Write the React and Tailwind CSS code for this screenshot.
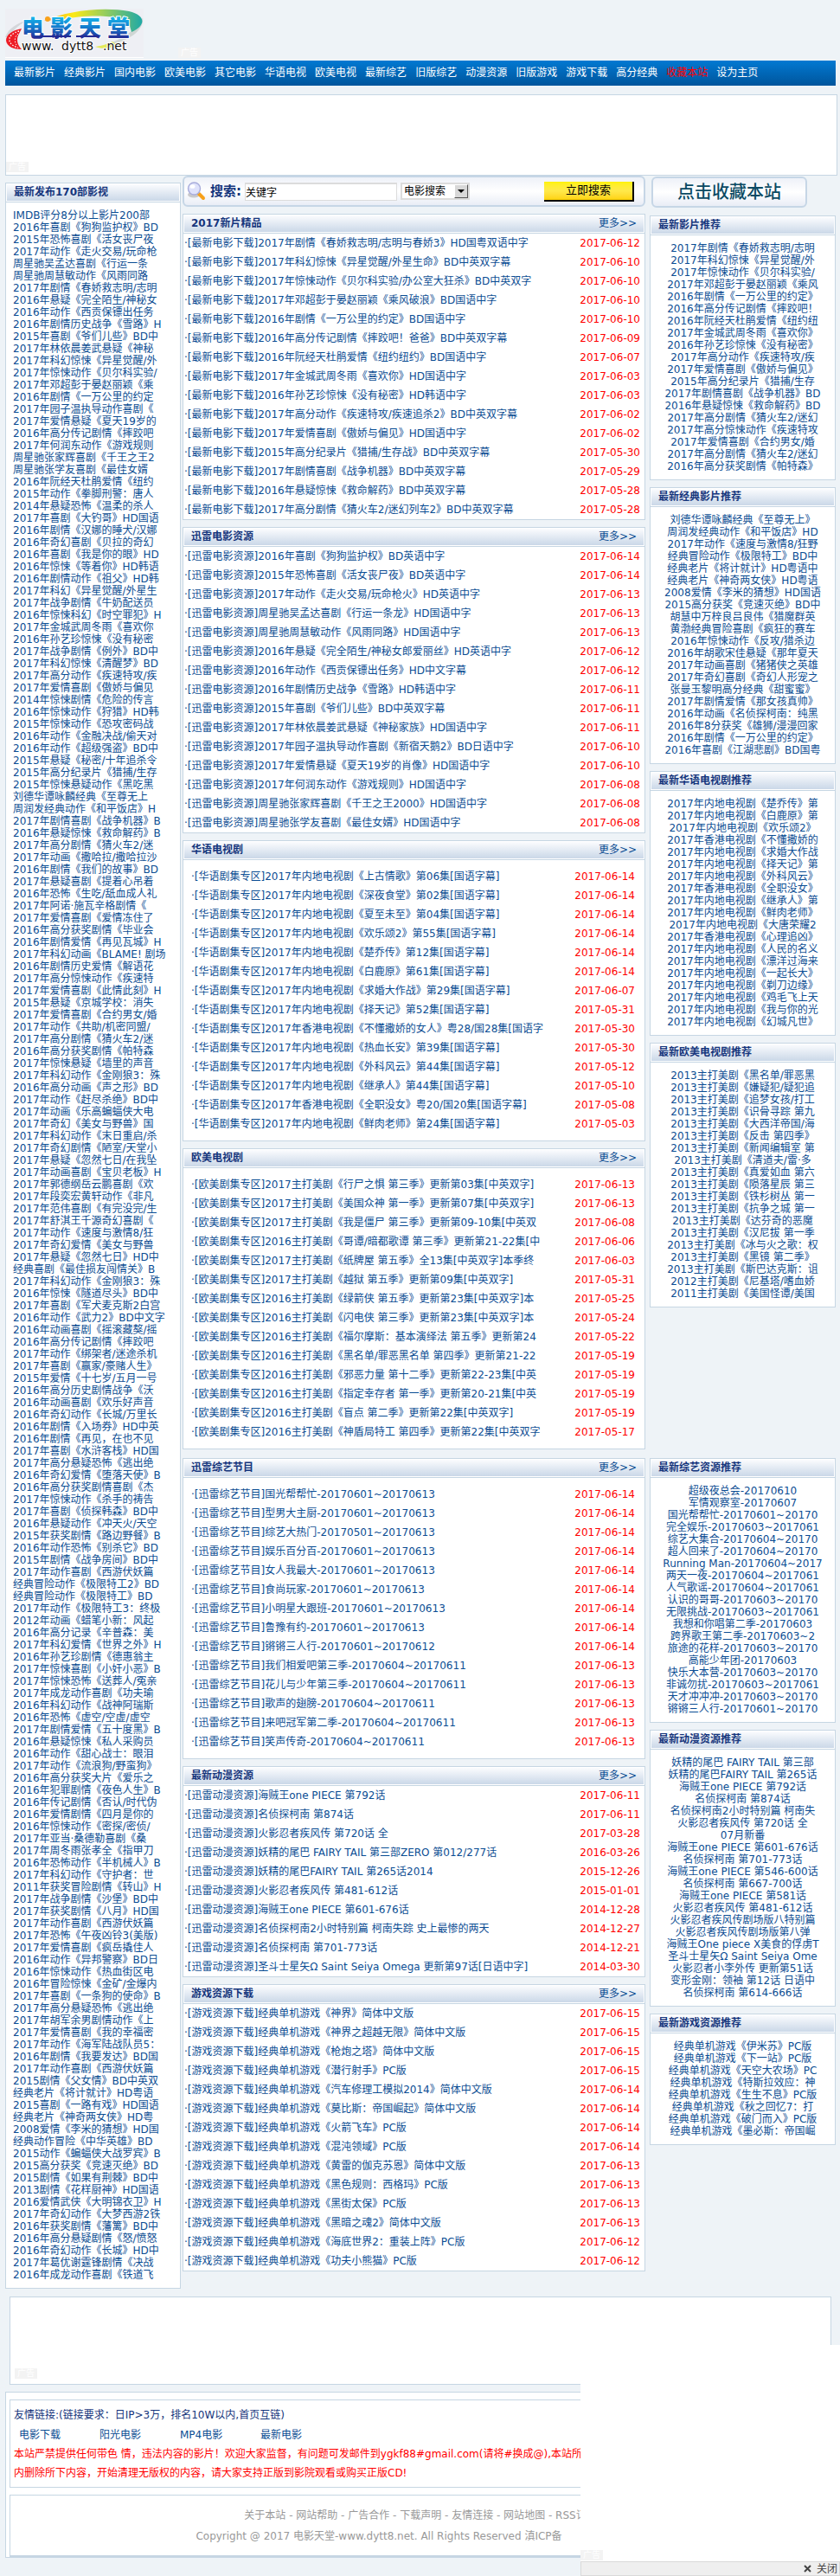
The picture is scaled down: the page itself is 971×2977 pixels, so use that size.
const lines = (s) => s.trim().split('\n');

const navItems = [
  '最新影片', '经典影片', '国内电影', '欧美电影', '其它电影', '华语电视', '欧美电视', '最新综艺',
  '旧版综艺', '动漫资源', '旧版游戏', '游戏下载', '高分经典', '收藏本站', '设为主页',
];

const latest = lines(`
IMDB评分8分以上影片200部
2016年喜剧《狗狗监护权》BD
2015年恐怖喜剧《活女丧尸夜
2017年动作《走火交易/玩命枪
周星驰吴孟达喜剧《行运一条
周星驰周慧敏动作《风雨同路
2017年剧情《春娇救志明/志明
2016年悬疑《完全陌生/神秘女
2016年动作《西贡保镖出任务
2016年剧情历史战争《雪路》H
2015年喜剧《爷们儿些》BD中
2017年林依晨姜武悬疑《神秘
2017年科幻惊悚《异星觉醒/外
2017年惊悚动作《贝尔科实验/
2017年邓超彭于晏赵丽颖《乘
2016年剧情《一万公里的约定
2017年园子温执导动作喜剧《
2017年爱情悬疑《夏天19岁的
2016年高分传记剧情《摔跤吧
2017年何润东动作《游戏规则
周星驰张家辉喜剧《千王之王2
周星驰张学友喜剧《最佳女婿
2016年阮经天杜鹃爱情《纽约
2015年动作《拳脚刑警：唐人
2014年悬疑恐怖《温柔的杀人
2017年喜剧《大钓哥》HD国语
2016年剧情《汉娜的睡犬/汉娜
2016年奇幻喜剧《贝拉的奇幻
2016年喜剧《我是你的眼》HD
2016年惊悚《等着你》HD韩语
2016年剧情动作《祖父》HD韩
2017年科幻《异星觉醒/外星生
2017年战争剧情《牛奶配送员
2016年惊悚科幻《时空罪犯》H
2017年金城武周冬雨《喜欢你
2016年孙艺珍惊悚《没有秘密
2017年战争剧情《例外》BD中
2017年科幻惊悚《清醒梦》BD
2017年高分动作《疾速特攻/疾
2017年爱情喜剧《傲娇与偏见
2014年惊悚剧情《危险的传言
2016年惊悚动作《狩猎》HD韩
2015年惊悚动作《恐攻密码战
2016年动作《金融决战/偷天对
2016年动作《超级强盗》BD中
2015年悬疑《秘密/十年追杀令
2015年高分纪录片《猎捕/生存
2015年惊悚悬疑动作《黑吃黑
刘德华谭咏麟经典《至尊无上
周润发经典动作《和平饭店》H
2017年剧情喜剧《战争机器》B
2016年悬疑惊悚《救命解药》B
2017年高分剧情《猜火车2/迷
2017年动画《撒哈拉/撒哈拉沙
2016年剧情《我们的故事》BD
2017年悬疑喜剧《提着心吊着
2016年恐怖《生吃/舐血成人礼
2017年阿诺·施瓦辛格剧情《
2017年爱情喜剧《爱情冻住了
2016年高分获奖剧情《毕业会
2016年剧情爱情《再见瓦城》H
2017年科幻动画《BLAME! 剧场
2016年剧情历史爱情《解语花
2017年高分惊悚动作《疾速特
2017年爱情喜剧《此情此刻》H
2015年悬疑《京城学校：消失
2017年爱情喜剧《合约男女/婚
2017年动作《共助/机密同盟/
2017年高分剧情《猜火车2/迷
2016年高分获奖剧情《帕特森
2017年惊悚悬疑《墙里的声音
2017年科幻动作《金刚狼3：殊
2016年高分动画《声之形》BD
2017年动作《赶尽杀绝》BD中
2017年动画《乐高蝙蝠侠大电
2017年奇幻《美女与野兽》国
2017年科幻动作《末日重启/杀
2017年奇幻剧情《陋室/天堂小
2017年悬疑《忽然七日/在我坠
2017年动画喜剧《宝贝老板》H
2017年郭德纲岳云鹏喜剧《欢
2017年段奕宏黄轩动作《非凡
2017年范伟喜剧《有完没完/生
2017年舒淇王千源奇幻喜剧《
2017年动作《速度与激情8/狂
2017年奇幻爱情《美女与野兽
2017年悬疑《忽然七日》HD中
经典喜剧《最佳损友闯情关》B
2017年科幻动作《金刚狼3：殊
2016年惊悚《隧道尽头》BD中
2017年喜剧《军犬麦克斯2白宫
2016年动作《武力2》BD中文字
2016年动画喜剧《摇滚藏獒/摇
2016年高分传记剧情《摔跤吧
2017年动作《绑架者/迷途杀机
2017年喜剧《赢家/豪赌人生》
2015年爱情《十七岁/五月一号
2016年高分历史剧情战争《沃
2016年动画喜剧《欢乐好声音
2016年奇幻动作《长城/万里长
2016年剧情《入场券》HD中英
2016年剧情《再见，在也不见
2017年喜剧《水浒客栈》HD国
2017年高分悬疑恐怖《逃出绝
2016年奇幻爱情《堕落天使》B
2016年高分获奖剧情喜剧《杰
2017年惊悚动作《杀手的祷告
2017年喜剧《侦探韩森》BD中
2016年悬疑动作《冲天火/天空
2015年获奖剧情《路边野餐》B
2016年动作恐怖《别杀它》BD
2015年剧情《战争房间》BD中
2017年动作喜剧《西游伏妖篇
经典冒险动作《极限特工2》BD
经典冒险动作《极限特工》BD
2017年动作《极限特工3：终极
2012年动画《蜡笔小新：风起
2016年高分记录《辛普森：美
2017年科幻爱情《世界之外》H
2016年孙艺珍剧情《德惠翁主
2017年惊悚喜剧《小奸小恶》B
2017年惊悚恐怖《送葬人/冤亲
2017年成龙动作喜剧《功夫瑜
2016年科幻动作《战神阿瑞斯
2016年恐怖《虚空/空虚/虚空
2017年剧情爱情《五十度黑》B
2016年悬疑惊悚《私人采购员
2016年动作《甜心战士：眼泪
2017年动作《流浪狗/野蛮狗》
2016年高分获奖大片《爱乐之
2016年犯罪剧情《夜色人生》B
2016年传记剧情《否认/时代伪
2016年爱情剧情《四月是你的
2016年惊悚动作《密探/密侦/
2017年亚当·桑德勒喜剧《桑
2017年周冬雨张孝全《指甲刀
2016年恐怖动作《半机械人》B
2017年科幻动作《守护者：世
2011年获奖冒险剧情《转山》H
2017年战争剧情《沙堡》BD中
2017年获奖剧情《八月》HD国
2017年动作喜剧《西游伏妖篇
2017年恐怖《午夜凶铃3(美版)
2017年爱情喜剧《疯岳撬佳人
2016年动作《异邦警察》BD日
2016年惊悚动作《热血街区电
2016年冒险惊悚《金矿/金爆内
2017年喜剧《一条狗的使命》B
2017年高分悬疑恐怖《逃出绝
2017年胡军余男剧情动作《上
2017年爱情喜剧《我的幸福密
2017年动作《海军陆战队员5：
2016年剧情《我要发达》BD国
2017年动作喜剧《西游伏妖篇
2015剧情《父女情》BD中英双
经典老片《将计就计》HD粤语
2015喜剧《一路有戏》HD国语
经典老片《神奇两女侠》HD粤
2008爱情《李米的猜想》HD国
经典动作冒险《中华英雄》BD
2015动作《蝙蝠侠大战罗宾》B
2015高分获奖《竞速灭绝》BD
2015剧情《如果有荆棘》BD中
2013剧情《花样厨神》HD国语
2016爱情武侠《大明锦衣卫》H
2017年奇幻动作《大梦西游2铁
2016年获奖剧情《藩篱》BD中
2016年高分悬疑剧情《怒/愤怒
2016年奇幻动作《长城》HD中
2017年葛优谢霆锋剧情《决战
2016年成龙动作喜剧《铁道飞
`);

const topPanels = [
  {
    title: '2017新片精品',
    tag: '最新电影下载',
    items: lines(`
2017年剧情《春娇救志明/志明与春娇3》HD国粤双语中字|2017-06-12
2017年科幻惊悚《异星觉醒/外星生命》BD中英双字幕|2017-06-10
2017年惊悚动作《贝尔科实验/办公室大狂杀》BD中英双字|2017-06-10
2017年邓超彭于晏赵丽颖《乘风破浪》BD国语中字|2017-06-10
2016年剧情《一万公里的约定》BD国语中字|2017-06-10
2016年高分传记剧情《摔跤吧！爸爸》BD中英双字幕|2017-06-09
2016年阮经天杜鹃爱情《纽约纽约》BD国语中字|2017-06-07
2017年金城武周冬雨《喜欢你》HD国语中字|2017-06-03
2016年孙艺珍惊悚《没有秘密》HD韩语中字|2017-06-03
2017年高分动作《疾速特攻/疾速追杀2》BD中英双字幕|2017-06-02
2017年爱情喜剧《傲娇与偏见》HD国语中字|2017-06-02
2015年高分纪录片《猎捕/生存战》BD中英双字幕|2017-05-30
2017年剧情喜剧《战争机器》BD中英双字幕|2017-05-29
2016年悬疑惊悚《救命解药》BD中英双字幕|2017-05-28
2017年高分剧情《猜火车2/迷幻列车2》BD中英双字幕|2017-05-28
`),
  },
  {
    title: '迅雷电影资源',
    tag: '迅雷电影资源',
    items: lines(`
2016年喜剧《狗狗监护权》BD英语中字|2017-06-14
2015年恐怖喜剧《活女丧尸夜》BD英语中字|2017-06-14
2017年动作《走火交易/玩命枪火》HD英语中字|2017-06-13
周星驰吴孟达喜剧《行运一条龙》HD国语中字|2017-06-13
周星驰周慧敏动作《风雨同路》HD国语中字|2017-06-13
2016年悬疑《完全陌生/神秘女郎爱丽丝》HD英语中字|2017-06-12
2016年动作《西贡保镖出任务》HD中文字幕|2017-06-12
2016年剧情历史战争《雪路》HD韩语中字|2017-06-11
2015年喜剧《爷们儿些》BD中英双字幕|2017-06-11
2017年林依晨姜武悬疑《神秘家族》HD国语中字|2017-06-11
2017年园子温执导动作喜剧《新宿天鹅2》BD日语中字|2017-06-10
2017年爱情悬疑《夏天19岁的肖像》HD国语中字|2017-06-10
2017年何润东动作《游戏规则》HD国语中字|2017-06-08
周星驰张家辉喜剧《千王之王2000》HD国语中字|2017-06-08
周星驰张学友喜剧《最佳女婿》HD国语中字|2017-06-08
`),
  },
  {
    title: '华语电视剧',
    tag: '华语剧集专区',
    padded: true,
    items: lines(`
2017年内地电视剧《上古情歌》第06集[国语字幕]|2017-06-14
2017年内地电视剧《深夜食堂》第02集[国语字幕]|2017-06-14
2017年内地电视剧《夏至未至》第04集[国语字幕]|2017-06-14
2017年内地电视剧《欢乐颂2》第55集[国语字幕]|2017-06-14
2017年内地电视剧《楚乔传》第12集[国语字幕]|2017-06-14
2017年内地电视剧《白鹿原》第61集[国语字幕]|2017-06-14
2017年内地电视剧《求婚大作战》第29集[国语字幕]|2017-06-07
2017年内地电视剧《择天记》第52集[国语字幕]|2017-05-31
2017年香港电视剧《不懂撒娇的女人》粤28/国28集[国语字|2017-05-30
2017年内地电视剧《热血长安》第39集[国语字幕]|2017-05-30
2017年内地电视剧《外科风云》第44集[国语字幕]|2017-05-12
2017年内地电视剧《继承人》第44集[国语字幕]|2017-05-10
2017年香港电视剧《全职没女》粤20/国20集[国语字幕]|2017-05-08
2017年内地电视剧《鲜肉老师》第24集[国语字幕]|2017-05-03
`),
  },
  {
    title: '欧美电视剧',
    tag: '欧美剧集专区',
    padded: true,
    items: lines(`
2017主打美剧《行尸之惧 第三季》更新第03集[中英双字]|2017-06-13
2017主打美剧《美国众神 第一季》更新第07集[中英双字]|2017-06-13
2017主打美剧《我是僵尸 第三季》更新第09-10集[中英双|2017-06-08
2016主打美剧《哥谭/暗都歌谭 第三季》更新第21-22集[中|2017-06-06
2017主打美剧《纸牌屋 第五季》全13集[中英双字]本季终|2017-06-03
2017主打美剧《越狱 第五季》更新第09集[中英双字]|2017-05-31
2016主打美剧《绿箭侠 第五季》更新第23集[中英双字]本|2017-05-25
2016主打美剧《闪电侠 第三季》更新第23集[中英双字]本|2017-05-24
2016主打美剧《福尔摩斯：基本演绎法 第五季》更新第24|2017-05-22
2016主打美剧《黑名单/罪恶黑名单 第四季》更新第21-22|2017-05-19
2016主打美剧《邪恶力量 第十二季》更新第22-23集[中英|2017-05-19
2016主打美剧《指定幸存者 第一季》更新第20-21集[中英|2017-05-19
2016主打美剧《盲点 第二季》更新第22集[中英双字]|2017-05-19
2016主打美剧《神盾局特工 第四季》更新第22集[中英双字|2017-05-17
`),
  },
];

const bottomPanels = [
  {
    title: '迅雷综艺节目',
    tag: '迅雷综艺节目',
    padded: true,
    items: lines(`
国光帮帮忙-20170601~20170613|2017-06-14
型男大主厨-20170601~20170613|2017-06-14
综艺大热门-20170501~20170613|2017-06-14
娱乐百分百-20170601~20170613|2017-06-14
女人我最大-20170601~20170613|2017-06-14
食尚玩家-20170601~20170613|2017-06-14
小明星大跟班-20170601~20170613|2017-06-14
鲁豫有约-20170601~20170613|2017-06-14
锵锵三人行-20170601~20170612|2017-06-14
我们相爱吧第三季-20170604~20170611|2017-06-13
花儿与少年第三季-20170604~20170611|2017-06-13
歌声的翅膀-20170604~20170611|2017-06-13
来吧冠军第二季-20170604~20170611|2017-06-13
笑声传奇-20170604~20170611|2017-06-13
`),
  },
  {
    title: '最新动漫资源',
    tag: '迅雷动漫资源',
    items: lines(`
海贼王one PIECE 第792话|2017-06-11
名侦探柯南 第874话|2017-06-11
火影忍者疾风传 第720话 全|2017-03-28
妖精的尾巴 FAIRY TAIL 第三部ZERO 第012/277话|2016-03-26
妖精的尾巴FAIRY TAIL 第265话2014|2015-12-26
火影忍者疾风传 第481-612话|2015-01-01
海贼王one PIECE 第601-676话|2014-12-28
名侦探柯南2小时特别篇 柯南失踪 史上最惨的两天|2014-12-27
名侦探柯南 第701-773话|2014-12-21
圣斗士星矢Ω Saint Seiya Omega 更新第97话[日语中字]|2014-03-30
`),
  },
  {
    title: '游戏资源下载',
    tag: '游戏资源下载',
    items: lines(`
经典单机游戏《神界》简体中文版|2017-06-15
经典单机游戏《神界之超越无限》简体中文版|2017-06-15
经典单机游戏《枪炮之塔》简体中文版|2017-06-15
经典单机游戏《潜行射手》PC版|2017-06-15
经典单机游戏《汽车修理工模拟2014》简体中文版|2017-06-14
经典单机游戏《莫比斯：帝国崛起》简体中文版|2017-06-14
经典单机游戏《火箭飞车》PC版|2017-06-14
经典单机游戏《混沌领域》PC版|2017-06-14
经典单机游戏《黄雷的伽克苏恩》简体中文版|2017-06-13
经典单机游戏《黑色规则：西格玛》PC版|2017-06-13
经典单机游戏《黑街太保》PC版|2017-06-13
经典单机游戏《黑暗之魂2》简体中文版|2017-06-13
经典单机游戏《海底世界2：重装上阵》PC版|2017-06-12
经典单机游戏《功夫小熊猫》PC版|2017-06-12
`),
  },
];

const topSide = [
  {
    title: '最新影片推荐',
    items: lines(`
2017年剧情《春娇救志明/志明
2017年科幻惊悚《异星觉醒/外
2017年惊悚动作《贝尔科实验/
2017年邓超彭于晏赵丽颖《乘风
2016年剧情《一万公里的约定》
2016年高分传记剧情《摔跤吧！
2016年阮经天杜鹃爱情《纽约纽
2017年金城武周冬雨《喜欢你》
2016年孙艺珍惊悚《没有秘密》
2017年高分动作《疾速特攻/疾
2017年爱情喜剧《傲娇与偏见》
2015年高分纪录片《猎捕/生存
2017年剧情喜剧《战争机器》BD
2016年悬疑惊悚《救命解药》BD
2017年高分剧情《猜火车2/迷幻
2017年高分惊悚动作《疾速特攻
2017年爱情喜剧《合约男女/婚
2017年高分剧情《猜火车2/迷幻
2016年高分获奖剧情《帕特森》
`),
  },
  {
    title: '最新经典影片推荐',
    items: lines(`
刘德华谭咏麟经典《至尊无上》
周润发经典动作《和平饭店》HD
2017年动作《速度与激情8/狂野
经典冒险动作《极限特工》BD中
经典老片《将计就计》HD粤语中
经典老片《神奇两女侠》HD粤语
2008爱情《李米的猜想》HD国语
2015高分获奖《竞速灭绝》BD中
胡慧中万梓良吕良伟《猎魔群英
黄渤经典冒险喜剧《疯狂的赛车
2016年惊悚动作《反攻/猎杀边
2016年胡歌宋佳悬疑《那年夏天
2017年动画喜剧《猪猪侠之英雄
2017年奇幻喜剧《奇幻人形宠之
张曼玉黎明高分经典《甜蜜蜜》
2017年剧情爱情《那女孩真帅》
2016年动画《名侦探柯南：纯黑
2016年8分获奖《雄狮/漫漫回家
2016年剧情《一万公里的约定》
2016年喜剧《江湖悲剧》BD国粤
`),
  },
  {
    title: '最新华语电视剧推荐',
    items: lines(`
2017年内地电视剧《楚乔传》第
2017年内地电视剧《白鹿原》第
2017年内地电视剧《欢乐颂2》
2017年香港电视剧《不懂撒娇的
2017年内地电视剧《求婚大作战
2017年内地电视剧《择天记》第
2017年内地电视剧《外科风云》
2017年香港电视剧《全职没女》
2017年内地电视剧《继承人》第
2017年内地电视剧《鲜肉老师》
2017年内地电视剧《大唐荣耀2
2017年香港电视剧《心理追凶》
2017年内地电视剧《人民的名义
2017年内地电视剧《漂洋过海来
2017年内地电视剧《一起长大》
2017年内地电视剧《剃刀边缘》
2017年内地电视剧《鸡毛飞上天
2017年内地电视剧《我与你的光
2017年内地电视剧《幻城凡世》
`),
  },
  {
    title: '最新欧美电视剧推荐',
    items: lines(`
2013主打美剧《黑名单/罪恶黑
2013主打美剧《嫌疑犯/疑犯追
2013主打美剧《追梦女孩/打工
2013主打美剧《识骨寻踪 第九
2013主打美剧《大西洋帝国/海
2013主打美剧《反击 第四季》
2013主打美剧《新闻编辑室 第
2013主打美剧《清道夫/雷·多
2013主打美剧《真爱如血 第六
2013主打美剧《陨落星辰 第三
2013主打美剧《铁杉树丛 第一
2013主打美剧《抗争之城 第一
2013主打美剧《达芬奇的恶魔
2013主打美剧《汉尼拔 第一季
2013主打美剧《冰与火之歌：权
2013主打美剧《黑镜 第二季》
2013主打美剧《斯巴达克斯：诅
2012主打美剧《尼基塔/嗜血娇
2011主打美剧《美国怪谭/美国
`),
  },
];

const bottomSide = [
  {
    title: '最新综艺资源推荐',
    items: lines(`
超级夜总会-20170610
军情观察室-20170607
国光帮帮忙-20170601~20170
完全娱乐-20170603~2017061
综艺大集合-20170604~20170
超人回来了-20170604~20170
Running Man-20170604~2017
两天一夜-20170604~2017061
人气歌谣-20170604~2017061
认识的哥哥-20170603~20170
无限挑战-20170603~2017061
我想和你唱第二季-20170603
跨界歌王第二季-20170603~2
旅途的花样-20170603~20170
高能少年团-20170603
快乐大本营-20170603~20170
非诚勿扰-20170603~2017061
天才冲冲冲-20170603~20170
锵锵三人行-20170601~20170
`),
  },
  {
    title: '最新动漫资源推荐',
    items: lines(`
妖精的尾巴 FAIRY TAIL 第三部
妖精的尾巴FAIRY TAIL 第265话
海贼王one PIECE 第792话
名侦探柯南 第874话
名侦探柯南2小时特别篇 柯南失
火影忍者疾风传 第720话 全
07月新番
海贼王one PIECE 第601-676话
名侦探柯南 第701-773话
海贼王one PIECE 第546-600话
名侦探柯南 第667-700话
海贼王one PIECE 第581话
火影忍者疾风传 第481-612话
火影忍者疾风传剧场版八特别篇
火影忍者疾风传剧场版第八弹
海贼王One piece X美食的俘虏T
圣斗士星矢Ω Saint Seiya Ome
火影忍者小李外传 更新第51话
变形金刚：领袖 第12话 日语中
名侦探柯南 第614-666话
`),
  },
  {
    title: '最新游戏资源推荐',
    items: lines(`
经典单机游戏《伊米苏》PC版
经典单机游戏《下一站》PC版
经典单机游戏《天空大农场》PC
经典单机游戏《特斯拉效应：神
经典单机游戏《生生不息》PC版
经典单机游戏《秋之回忆7：打
经典单机游戏《破门而入》PC版
经典单机游戏《墨必斯：帝国崛
`),
  },
];

function AdBadge() {
  return (
    <span className="block h-3 w-[26px] bg-[#f3f3f3] text-center text-[10px] leading-[12px] text-white">广告</span>
  );
}

function Logo() {
  const glyphs = [['电', 19], ['影', 52], ['天', 85], ['堂', 118]];
  return (
    <svg width="160" height="57" viewBox="0 0 160 57" role="img" aria-label="电影天堂 www.dytt8.net" className="block shrink-0">
      <defs>
        <linearGradient id="swoosh" x1="0" x2="1" y1="0" y2="0">
          <stop offset="0" stopColor="#f7a823" />
          <stop offset="0.3" stopColor="#fbe916" />
          <stop offset="0.6" stopColor="#9ccf58" />
          <stop offset="1" stopColor="#1fa9a6" />
        </linearGradient>
        <linearGradient id="glyphBlue" x1="0" x2="0" y1="10" y2="34" gradientUnits="userSpaceOnUse">
          <stop offset="0" stopColor="#18b4ea" />
          <stop offset="0.5" stopColor="#1479cc" />
          <stop offset="1" stopColor="#242a94" />
        </linearGradient>
      </defs>
      <rect width="160" height="57" fill="#eeeff4" />
      <rect y="56" width="160" height="1" fill="#fff" />
      <path d="M0 33C4 22 14 17 26 13C14 20 8 26 4 33Z" fill="#d4d6da" />
      <path d="M159 11C161 26 140 40 108 45C128 38 146 30 152 18Z" fill="#d0d6d4" />
      <path d="M45 14C70 3 112 -3 143 3C164 8 162 20 146 27L144 20C140 8 104 5 62 13Z" fill="url(#swoosh)" />
      <path d="M104 44C112 43 118 41 124 38L129 42C121 46 112 47 104 44Z" fill="#e4ea5a" />
      <path d="M19 23C8 25 1 30 1 37C2 44 10 47 19 47C14 42 13 36 15 31Z" fill="#ee1c25" />
      <path d="M16 26C8 28 4 33 5 37C6 41 10 44 15 45" fill="none" stroke="#fff" strokeWidth="1.3" strokeDasharray="1.5 1.8" />
      <path d="M15 29C11 32 10 37 13 42" fill="none" stroke="#fff" strokeWidth="1" strokeDasharray="1.5 1.8" />
      {glyphs.map(([g, x]) => (
        <text key={g} x={x} y="32" fontSize="26" fontWeight="900" fontFamily="'Noto Sans CJK SC', sans-serif" fill="url(#glyphBlue)" stroke="#fff" strokeWidth="2" strokeLinejoin="round" paintOrder="stroke">{g}</text>
      ))}
      <path d="M40 32H76M82 32H108" stroke="#242a94" strokeWidth="2" />
      <circle cx="49" cy="12" r="3" fill="#f9a11b" />
      <g fontSize="14" fontFamily="'DejaVu Sans', sans-serif" fill="#111" stroke="#fff" strokeWidth="2" strokeLinejoin="round" paintOrder="stroke">
        <text x="19" y="48">www.</text>
        <text x="65" y="48">dytt8</text>
        <text x="113" y="48">.net</text>
      </g>
    </svg>
  );
}

function SearchIcon() {
  return (
    <svg width="22" height="22" viewBox="0 0 22 22" aria-hidden="true" className="block shrink-0">
      <ellipse cx="8" cy="15" rx="7" ry="3.5" fill="#c9c9cc" />
      <path d="M14 14L19 19" stroke="#f7a11a" strokeWidth="4" strokeLinecap="round" />
      <circle cx="8.5" cy="8" r="7" fill="#dfe2fb" stroke="#a9addb" strokeWidth="1.4" />
      <ellipse cx="6.5" cy="5.5" rx="3" ry="2.3" fill="#fff" />
    </svg>
  );
}

function PanelHeader({ title, more }) {
  return (
    <div className="border-b border-[#c6d6e3] bg-white px-px pb-px pt-px">
      <div className="flex h-[19px] items-center justify-between bg-linear-to-b from-[#fbfcfe] to-[#cbd8e8] px-2">
        <h2 className="text-[12px] font-bold leading-[19px] text-[#15357c]">{title}</h2>
        {more && <a href="#more" className="text-[12px] leading-[19px]">更多&gt;&gt;</a>}
      </div>
    </div>
  );
}

function ListPanel({ title, tag, items, padded }) {
  return (
    <section className="border border-[#c6d6e3] bg-white">
      <PanelHeader title={title} more />
      <ul className={padded ? 'py-2 pl-[9px] pr-[11px]' : 'pl-px pr-[5px]'}>
        {items.map((row, i) => {
          const [text, date] = row.split('|');
          return (
            <li key={i} className="flex h-[22px] items-center justify-between whitespace-nowrap leading-[22px]">
              <span className="overflow-hidden">
                ·<a href="#list">[{tag}]</a><a href="#item">{text}</a>
              </span>
              <time className="text-[#f00]">{date}</time>
            </li>
          );
        })}
      </ul>
    </section>
  );
}

function SidePanel({ title, items, centered }) {
  return (
    <section className="border border-[#c6d6e3] bg-white">
      <PanelHeader title={title} />
      <ul className={centered ? 'py-2 text-center' : 'py-2 pl-[8px]'}>
        {items.map((text, i) => (
          <li key={i} className="h-[14px] whitespace-nowrap leading-[14px]">
            <a href="#item">{text}</a>
          </li>
        ))}
      </ul>
    </section>
  );
}

function SearchBar() {
  return (
    <form className="flex h-9 items-center rounded-md border-2 border-[#c6d6e6] bg-linear-to-b from-[#eef1f8] via-white to-[#e9edf6] pl-[3px] pr-[11px]" onSubmit={(e) => e.preventDefault()}>
      <SearchIcon />
      <label htmlFor="keyword" className="ml-[5px] w-10 text-[15px] font-bold leading-[20px] text-[#15357c]">搜索:</label>
      <input id="keyword" type="text" defaultValue="关键字" className="h-[21px] w-44 border border-t-2 border-[#dcdcdc] bg-white text-[12px] text-black outline-none" />
      <div className="relative ml-1 h-5 w-20">
        <select aria-label="搜索类型" className="h-5 w-full appearance-none border-2 border-[#dcdcdc] bg-white pl-0.5 text-[12px] leading-[16px] text-black outline-none">
          <option>电影搜索</option>
        </select>
        <span className="pointer-events-none absolute right-0.5 top-0.5 flex h-4 w-4 items-center justify-center border border-b-[#555] border-l-white border-r-[#555] border-t-white bg-[#d8d8d8]">
          <svg width="8" height="4" viewBox="0 0 8 4" aria-hidden="true"><path d="M0 0H8L4 4Z" fill="#000" /></svg>
        </span>
      </div>
      <button type="submit" className="ml-auto h-[23px] w-[104px] border-b-2 border-r-2 border-black bg-linear-to-b from-[#fff200] via-[#ffe94a] to-[#ffd200] text-[13px] leading-[20px] text-black">立即搜索</button>
    </form>
  );
}

export default function App() {
  return (
    <div className="min-h-screen overflow-x-hidden bg-[#eef3f7] pb-6 font-['DejaVu_Sans','Noto_Sans_CJK_SC',sans-serif] text-[12px] leading-[14px] text-[#0b4d93]">
      <div className="pl-[6px] pr-[5px]">
        <header className="flex items-end pt-[10px]">
          <Logo />
          <div className="ml-10"><AdBadge /></div>
        </header>

        <nav className="mt-[3px] flex h-[29px] items-center gap-[10px] bg-linear-to-b from-[#0279d2] to-[#00559c] pl-[10px] leading-[29px] text-white">
          {navItems.map((item) => (
            <a key={item} href="#nav" className={item === '收藏本站' ? 'whitespace-nowrap text-[#f00]' : 'whitespace-nowrap'}>{item}</a>
          ))}
        </nav>

        <div className="-mr-[2px] mt-[10px] flex h-[94px] items-end border border-[#c6d6e3] bg-white pb-[3px]">
          <AdBadge />
        </div>

        <div className="flex items-start gap-[2px]">
          <aside className="w-[203px] shrink-0 pt-2">
            <SidePanel title="最新发布170部影视" items={latest} />
          </aside>
          <main className="grid min-w-0 flex-1 grid-cols-[minmax(0,1fr)_215px] gap-x-[5px] gap-y-[10px]">
            <div className="flex flex-col gap-2">
              <SearchBar />
              {topPanels.map((p) => <ListPanel key={p.title} {...p} />)}
            </div>
            <div className="flex flex-col gap-2">
              <div className="flex h-[38px] items-center pl-[2px]">
                <a href="#favorite" className="block h-9 w-[180px] rounded-md border-2 border-[#c6d6e6] bg-linear-to-b from-[#eef1f8] via-white to-[#e9edf6] text-center text-[20px] font-medium leading-[32px] text-[#0a4a63]">点击收藏本站</a>
              </div>
              {topSide.map((p) => <SidePanel key={p.title} {...p} centered />)}
            </div>
            <div className="flex flex-col gap-2">
              {bottomPanels.map((p) => <ListPanel key={p.title} {...p} />)}
            </div>
            <div className="flex flex-col gap-2">
              {bottomSide.map((p) => <SidePanel key={p.title} {...p} centered />)}
            </div>
          </main>
        </div>

        <div className="ml-[5px] mr-[5px] mt-[9px] flex h-[102px] items-end border border-[#c6d6e3] bg-white pb-[6px] pl-[5px]">
          <AdBadge />
        </div>

        <footer className="mt-2 border border-[#c6d6e3] bg-white px-1 pt-2">
          <div className="border border-[#c6d6e3] px-1 pb-[5px] pt-[5px]">
            <p className="leading-[24px] text-[#15357c]">友情链接:(链接要求：日IP&gt;3万，排名10W以内,首页互链)</p>
            <div className="flex leading-[22px]">
              {['电影下载', '阳光电影', 'MP4电影', '最新电影'].map((name) => (
                <a key={name} href="#friend" className="w-[93px] pl-[6px]">{name}</a>
              ))}
            </div>
            <p className="overflow-hidden whitespace-nowrap leading-[22px] text-[#f00]">
              本站严禁提供任何带色 情，违法内容的影片！欢迎大家监督，有问题可发邮件到ygkf88#gmail.com(请将#换成@),本站所有
              <br />
              内删除所下内容，开始清理无版权的内容，请大家支持正版到影院观看或购买正版CD!
            </p>
          </div>
          <div className="mt-2 border border-b-2 border-[#c6d6e3] pb-[10px] pt-[11px] text-center leading-[24px] text-[#999]">
            <p>关于本站 - 网站帮助 - 广告合作 - 下载声明 - 友情连接 - 网站地图 - RSS订阅</p>
            <p className="pr-24">Copyright @ 2017 电影天堂-www.dytt8.net. All Rights Reserved 滇ICP备</p>
          </div>
        </footer>
      </div>

      <div className="fixed bottom-0 right-0 flex h-[267px] w-[300px] flex-col justify-end bg-white">
        <AdBadge />
        <div className="mt-px flex h-[17px] items-center justify-end border border-[#d9d9d9] bg-[#efefef] pr-[2px]">
          <button type="button" className="flex items-center gap-[6px] text-[12px] leading-[14px] text-[#444]">
            <svg width="9" height="9" viewBox="0 0 9 9" aria-hidden="true"><path d="M1 1L8 8M8 1L1 8" stroke="#444" strokeWidth="2" /></svg>
            关闭
          </button>
        </div>
      </div>
    </div>
  );
}
